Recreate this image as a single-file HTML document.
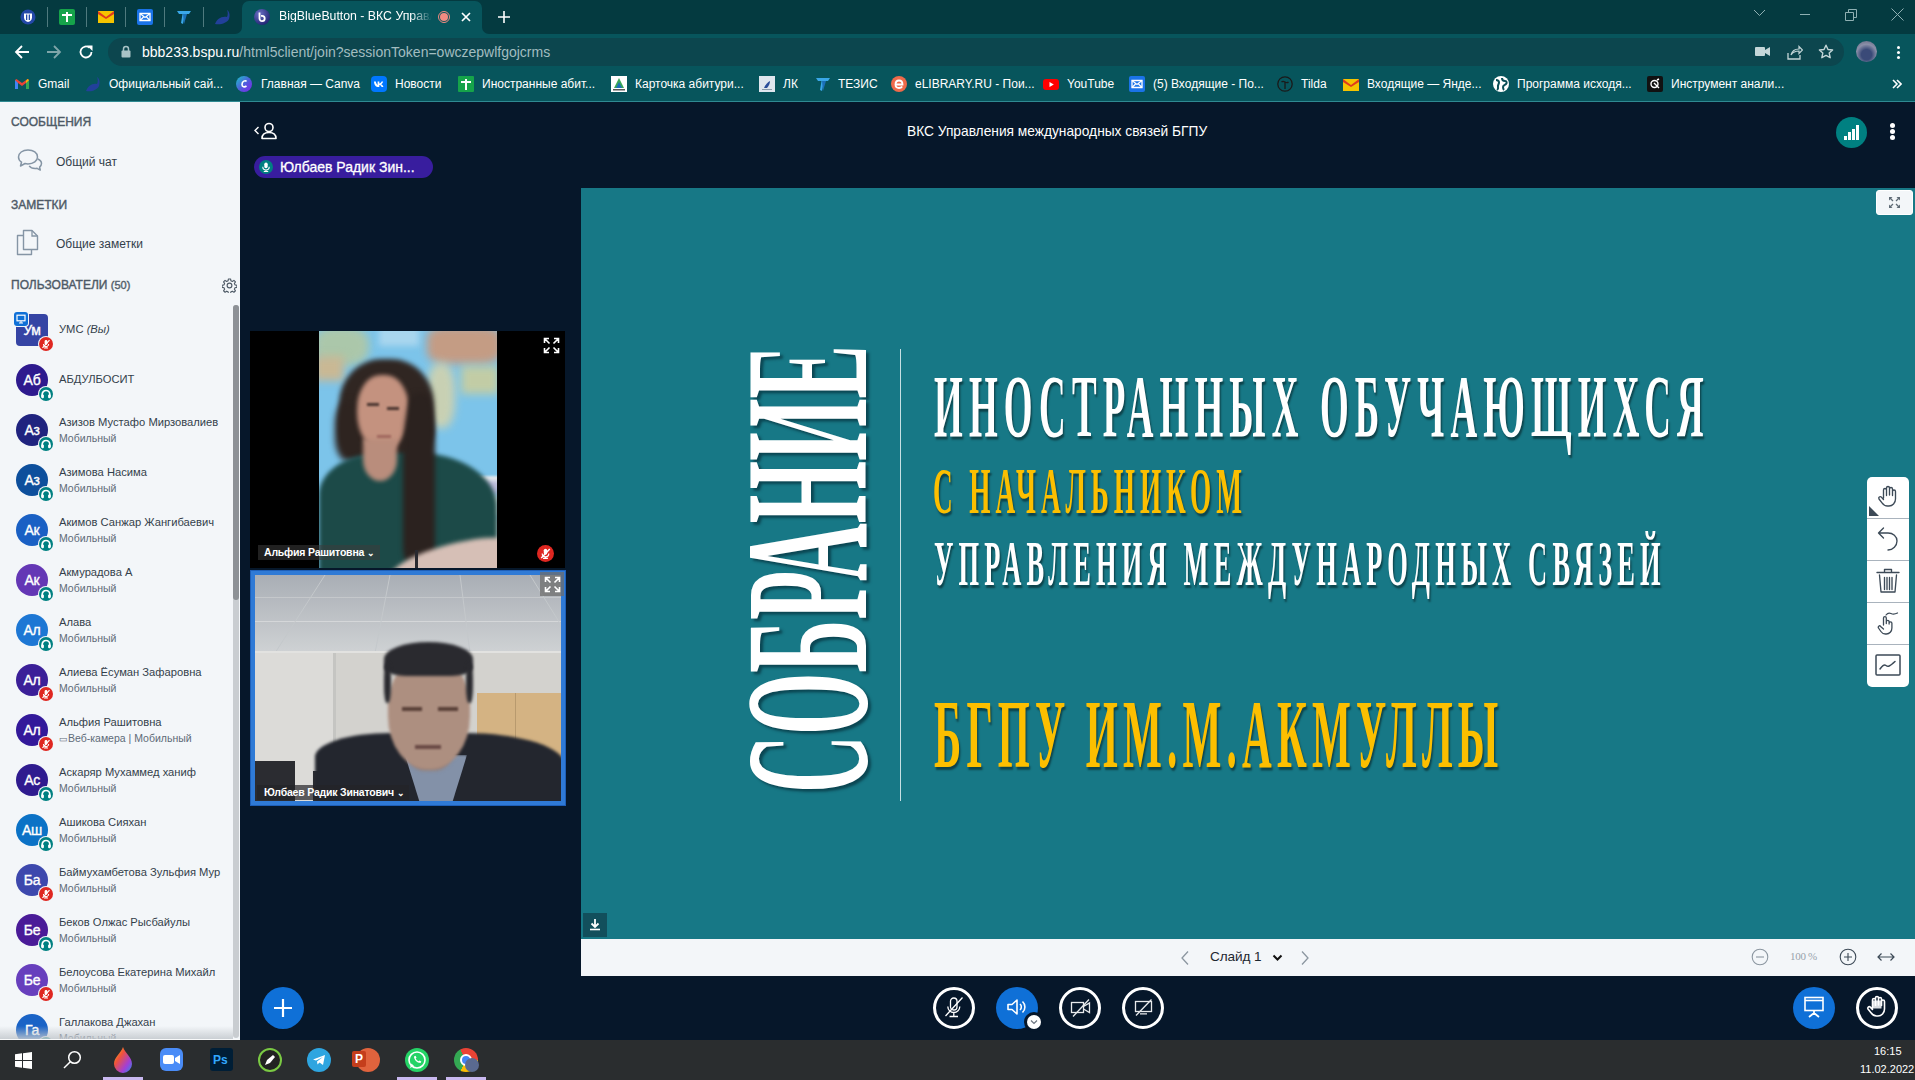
<!DOCTYPE html>
<html><head><meta charset="utf-8">
<style>
*{margin:0;padding:0;box-sizing:border-box}
html,body{width:1915px;height:1080px;overflow:hidden;background:#06172a;font-family:"Liberation Sans",sans-serif}
.a{position:absolute}
.t{position:absolute;white-space:nowrap;line-height:1}
/* chrome */
#tabs{left:0;top:0;width:1915px;height:34px;background:#043a40}
#toolbar{left:0;top:34px;width:1915px;height:68px;background:#07555c}
#addr{left:108px;top:38px;width:1736px;height:28px;border-radius:14px;background:#0c464e}
.bm{position:absolute;top:77px;font-size:12px;color:#fff;white-space:nowrap;line-height:14px}
.bi{position:absolute;top:76px;width:16px;height:16px}
/* sidebar */
#side{left:0;top:102px;width:240px;height:938px;background:#f3f6f9;overflow:hidden}
.hd{position:absolute;left:11px;font-size:12px;color:#4e5a66;-webkit-text-stroke:.4px #4e5a66;white-space:nowrap;line-height:14px}
.usr{position:absolute;left:0;width:232px;height:50px}
.av{position:absolute;left:16px;width:32px;height:32px;border-radius:50%;color:#fff;font-size:14px;line-height:32px;text-align:center;letter-spacing:-.3px;-webkit-text-stroke:.35px #fff}
.nm{position:absolute;left:59px;font-size:11.2px;color:#333f4b;white-space:nowrap;line-height:13px}
.sub{position:absolute;left:59px;font-size:10.5px;color:#5e6b78;white-space:nowrap;line-height:13px}
.bd{position:absolute;left:39px;top:23px;width:14px;height:14px;border-radius:50%}
.bd.g{background:#008081}
.bd.r{background:#df2721}
/* main */
#slide{left:581px;top:188px;width:1334px;height:751px;background:#177886;overflow:hidden}
#pbar{left:581px;top:939px;width:1334px;height:37px;background:#f3f6f9}
#taskbar{left:0;top:1040px;width:1915px;height:40px;background:#2a2d2f}
.btn{position:absolute;top:987px;width:42px;height:42px;border-radius:50%;border:3px solid #fff}
.sl{position:absolute;font-family:"Liberation Serif",serif;color:#fff;white-space:nowrap;line-height:1;transform-origin:0 0;text-shadow:3px 3px 3px rgba(0,0,0,.45)}
</style></head><body>

<!-- ================= BROWSER CHROME ================= -->
<div id="tabs" class="a"></div>
<div id="toolbar" class="a"></div>
<div class="a" style="left:234px;top:24px;width:256px;height:10px;background:#07555c"></div>
<div class="a" style="left:226px;top:14px;width:16px;height:20px;background:#043a40;border-radius:0 0 7px 0"></div>
<div class="a" style="left:482px;top:14px;width:16px;height:20px;background:#043a40;border-radius:0 0 0 7px"></div>
<div class="a" style="left:242px;top:1px;width:240px;height:33px;background:#07555c;border-radius:7px 7px 0 0"></div>
<div id="addr" class="a"></div>

<!-- tab favicons -->
<svg class="a" style="left:20px;top:9px" width="16" height="16" viewBox="0 0 16 16"><circle cx="8" cy="8" r="7.5" fill="#2448a8"/><path d="M4 4.5h8v4c0 2.5-2 4-4 4.5-2-.5-4-2-4-4.5z" fill="#fff"/><path d="M6 5.5h1.3v5.5H6zM8.7 5.5H10v5.5H8.7z" fill="#2448a8"/></svg>
<div class="a" style="left:47px;top:7px;width:1px;height:20px;background:#4f7a7e"></div>
<svg class="a" style="left:59px;top:9px" width="16" height="16" viewBox="0 0 16 16"><rect width="16" height="16" rx="2" fill="#16a34a"/><path d="M7 3h2v10H7z M3 5h10v2H3z" fill="#fff"/></svg>
<div class="a" style="left:86px;top:7px;width:1px;height:20px;background:#4f7a7e"></div>
<svg class="a" style="left:98px;top:10px" width="16" height="14" viewBox="0 0 16 14"><rect y="1" width="16" height="12" fill="#f5c400"/><path d="M0 1l8 6 8-6v3L8 9 0 4z" fill="#e03a1e"/></svg>
<div class="a" style="left:125px;top:7px;width:1px;height:20px;background:#4f7a7e"></div>
<svg class="a" style="left:137px;top:9px" width="16" height="16" viewBox="0 0 16 16"><rect width="16" height="16" rx="2" fill="#1a73e8"/><path d="M3 4.5h10v7H3z" fill="none" stroke="#fff" stroke-width="1.3"/><path d="M3 4.5l5 4 5-4M3 11.5l3.5-3.5M13 11.5L9.5 8" fill="none" stroke="#fff" stroke-width="1.2"/></svg>
<div class="a" style="left:164px;top:7px;width:1px;height:20px;background:#4f7a7e"></div>
<svg class="a" style="left:176px;top:9px" width="16" height="16" viewBox="0 0 16 16"><path d="M1 2h14l-2 3H9l-2 10-2-1 1.5-9H3z" fill="#3aa7e8"/><path d="M7 5h4l-3 10z" fill="#1b6fb8"/></svg>
<div class="a" style="left:203px;top:7px;width:1px;height:20px;background:#4f7a7e"></div>
<svg class="a" style="left:214px;top:9px" width="17" height="16" viewBox="0 0 17 16"><path d="M1 15c2-5 6-8 12-7 1-2 1-5 0-7 3 2 3 6 2 9-2 4-8 6-14 5z" fill="#22409a"/></svg>
<!-- active tab -->
<svg class="a" style="left:254px;top:9px" width="16" height="16" viewBox="0 0 16 16"><defs><radialGradient id="bbg" cx=".35" cy=".3" r=".8"><stop offset="0" stop-color="#6a6fc4"/><stop offset="1" stop-color="#1c1f6e"/></radialGradient></defs><circle cx="8" cy="8" r="8" fill="url(#bbg)"/><path d="M5.5 3.5v6a2.6 2.6 0 1 0 2.6-2.6H7" fill="none" stroke="#fff" stroke-width="1.8"/></svg>
<div class="t" style="left:279px;top:10px;font-size:12.3px;color:#fff;width:153px;overflow:hidden;-webkit-mask-image:linear-gradient(90deg,#000 86%,transparent)">BigBlueButton - ВКС Управления</div>
<svg class="a" style="left:438px;top:11px" width="12" height="12" viewBox="0 0 12 12"><circle cx="6" cy="6" r="5.5" fill="none" stroke="#f28b82" stroke-width="1"/><circle cx="6" cy="6" r="4" fill="#f28b82"/></svg>
<svg class="a" style="left:461px;top:12px" width="10" height="10" viewBox="0 0 10 10"><path d="M1 1l8 8M9 1L1 9" stroke="#fff" stroke-width="1.7"/></svg>
<svg class="a" style="left:497px;top:10px" width="14" height="14" viewBox="0 0 14 14"><path d="M7 1v12M1 7h12" stroke="#fff" stroke-width="1.6"/></svg>
<!-- window controls -->
<svg class="a" style="left:1753px;top:9px" width="13" height="8" viewBox="0 0 13 8"><path d="M1 1l5.5 5.5L12 1" fill="none" stroke="#8fb0b3" stroke-width="1"/></svg>
<div class="a" style="left:1800px;top:14px;width:10px;height:1px;background:#8fb0b3"></div>
<svg class="a" style="left:1845px;top:9px" width="12" height="12" viewBox="0 0 12 12"><path d="M.5 3.5h8v8h-8z M3.5 3.5V.5h8v8h-3" fill="none" stroke="#8fb0b3" stroke-width="1"/></svg>
<svg class="a" style="left:1891px;top:8px" width="13" height="13" viewBox="0 0 13 13"><path d="M.5 .5l12 12M12.5 .5l-12 12" fill="none" stroke="#8fb0b3" stroke-width="1"/></svg>
<!-- toolbar -->
<svg class="a" style="left:14px;top:44px" width="16" height="16" viewBox="0 0 16 16"><path d="M15 8H2M8 2L2 8l6 6" fill="none" stroke="#fff" stroke-width="1.8"/></svg>
<svg class="a" style="left:46px;top:44px" width="16" height="16" viewBox="0 0 16 16"><path d="M1 8h13M8 2l6 6-6 6" fill="none" stroke="#7fa5a9" stroke-width="1.8"/></svg>
<svg class="a" style="left:78px;top:44px" width="16" height="16" viewBox="0 0 16 16"><path d="M13.5 8A5.5 5.5 0 1 1 11.6 3.8" fill="none" stroke="#fff" stroke-width="1.8"/><path d="M9 1.5h5.5V7z" fill="#fff"/></svg>
<svg class="a" style="left:121px;top:45px" width="10" height="13" viewBox="0 0 10 13"><path d="M2.5 6V4a2.5 2.5 0 0 1 5 0v2" fill="none" stroke="#a9c3c6" stroke-width="1.5"/><rect x="0.5" y="5.5" width="9" height="7" rx="1" fill="#a9c3c6"/></svg>
<div class="t" style="left:142px;top:45px;font-size:14px;color:#fff;line-height:14px">bbb233.bspu.ru<span style="color:#a2bdc0">/html5client/join?sessionToken=owczepwlfgojcrms</span></div>
<svg class="a" style="left:1755px;top:46px" width="15" height="11" viewBox="0 0 15 11"><rect y="1" width="10" height="9" rx="1" fill="#c4d6d8"/><path d="M10 4l5-3v9l-5-3z" fill="#c4d6d8"/></svg>
<svg class="a" style="left:1787px;top:44px" width="16" height="16" viewBox="0 0 16 16"><path d="M1 9v6h12v-4" fill="none" stroke="#c4d6d8" stroke-width="1.3"/><path d="M4 11c1-4 4-6 8-6V2.5l3.5 3.5L12 9.5V7c-3 0-6 1-8 4z" fill="none" stroke="#c4d6d8" stroke-width="1.2"/></svg>
<svg class="a" style="left:1818px;top:44px" width="16" height="16" viewBox="0 0 16 16"><path d="M8 1.2l2 4.3 4.6.5-3.4 3.1 1 4.6L8 11.4l-4.2 2.3 1-4.6L1.4 6l4.6-.5z" fill="none" stroke="#c4d6d8" stroke-width="1.4" stroke-linejoin="round"/></svg>
<div class="a" style="left:1856px;top:41px;width:21px;height:21px;border-radius:50%;background:radial-gradient(circle at 50% 65%,#3a4a78 0 30%,#8a8fa8 60%,#5a6078 100%)"></div>
<div class="a" style="left:1897px;top:46px;width:3px;height:3px;border-radius:50%;background:#fff;box-shadow:0 5px 0 #fff,0 10px 0 #fff"></div>

<!-- bookmarks -->
<svg class="bi" style="left:14px" width="16" height="16" viewBox="0 0 16 16"><path d="M1 4v9h3V7l4 3 4-3v6h3V4l-1.5-1L8 7 2.5 3z" fill="#ea4335"/><path d="M1 4v9h3V7z" fill="#4285f4"/><path d="M12 7v6h3V4z" fill="#34a853"/><path d="M13.5 3L15 4l-3 3V5z" fill="#fbbc04"/></svg>
<div class="bm" style="left:38px">Gmail</div>
<svg class="bi" style="left:85px" width="16" height="16" viewBox="0 0 16 16"><path d="M1 15c2-5 6-8 11-7 1-2 1-5 0-7 3 2 3 6 2 9-2 4-7 6-13 5z" fill="#22409a"/></svg>
<div class="bm" style="left:109px">Официальный сай...</div>
<svg class="bi" style="left:236px" width="16" height="16" viewBox="0 0 16 16"><defs><linearGradient id="cg" x1="0" y1="0" x2="1" y2="1"><stop offset="0" stop-color="#18c4c9"/><stop offset=".6" stop-color="#5a4fe0"/><stop offset="1" stop-color="#7d2ae8"/></linearGradient></defs><circle cx="8" cy="8" r="8" fill="url(#cg)"/><path d="M10.5 5.5c-1-1.5-4.5-.5-4.5 3 0 2.5 2.5 3 4.5 1.5" fill="none" stroke="#fff" stroke-width="1.6"/></svg>
<div class="bm" style="left:261px">Главная — Canva</div>
<svg class="bi" style="left:371px" width="16" height="16" viewBox="0 0 16 16"><rect width="16" height="16" rx="4" fill="#0077ff"/><path d="M3 5.5h1.8c.3 2 1.2 3.2 1.8 3.4V5.5h1.7v2c1 0 2-1.2 2.2-2h1.7c-.3 1.2-1.2 2.3-2 2.8 1 .4 1.9 1.5 2.2 2.7h-1.8c-.4-1-1.2-1.8-2.3-1.9V11h-.3C4.5 11 3.2 9 3 5.5z" fill="#fff"/></svg>
<div class="bm" style="left:395px">Новости</div>
<svg class="bi" style="left:458px" width="16" height="16" viewBox="0 0 16 16"><rect width="16" height="16" rx="1" fill="#16a34a"/><path d="M7 3h2v11H7z M3 5h10v2H3z" fill="#fff"/></svg>
<div class="bm" style="left:482px">Иностранные абит...</div>
<svg class="bi" style="left:611px" width="16" height="16" viewBox="0 0 16 16"><rect width="16" height="16" fill="#fff"/><path d="M8 2l5 10H3z" fill="#3aa657"/><path d="M8 6l3 6H5z" fill="#1d6fb8"/><rect x="2" y="13" width="12" height="1.5" fill="#555"/></svg>
<div class="bm" style="left:635px">Карточка абитури...</div>
<svg class="bi" style="left:759px" width="16" height="16" viewBox="0 0 16 16"><rect width="16" height="16" fill="#dfe6ee"/><path d="M5 12c1-3 4-6 6-7 0 2-1 5-3 7z" fill="#2a4d9a"/><rect x="3" y="13" width="10" height="1" fill="#8a9aaa"/></svg>
<div class="bm" style="left:783px">ЛК</div>
<svg class="bi" style="left:815px" width="16" height="16" viewBox="0 0 16 16"><path d="M1 2h14l-2 3H9l-2 10-2-1 1.5-9H3z" fill="#3aa7e8"/><path d="M7 5h4l-3 10z" fill="#1b6fb8"/></svg>
<div class="bm" style="left:838px">ТЕЗИС</div>
<svg class="bi" style="left:891px" width="16" height="16" viewBox="0 0 16 16"><circle cx="8" cy="8" r="8" fill="#ef6a4a"/><path d="M4.5 8.5h7c0-2.5-1.5-4-3.5-4S4.5 6 4.5 8.5 6 12 8 12c1.5 0 2.5-.5 3.2-1.5" fill="none" stroke="#fff" stroke-width="1.8"/></svg>
<div class="bm" style="left:915px">eLIBRARY.RU - Пои...</div>
<svg class="bi" style="left:1043px" width="16" height="16" viewBox="0 0 16 16"><rect x="0" y="3" width="16" height="11" rx="3" fill="#ff0000"/><path d="M6.5 6v5l4.3-2.5z" fill="#fff"/></svg>
<div class="bm" style="left:1067px">YouTube</div>
<svg class="bi" style="left:1129px" width="16" height="16" viewBox="0 0 16 16"><rect width="16" height="16" rx="2" fill="#1a73e8"/><path d="M3 4.5h10v7H3z" fill="none" stroke="#fff" stroke-width="1.3"/><path d="M3 4.5l5 4 5-4M3 11.5l3.5-3.5M13 11.5L9.5 8" fill="none" stroke="#fff" stroke-width="1.2"/></svg>
<div class="bm" style="left:1153px">(5) Входящие - По...</div>
<svg class="bi" style="left:1277px" width="16" height="16" viewBox="0 0 16 16"><circle cx="8" cy="8" r="7.2" fill="none" stroke="#1a1a1a" stroke-width="1.3"/><path d="M4.5 6c1-1 2-1 3.5 0s2.5 1 3.5 0M8 6.3V13" fill="none" stroke="#1a1a1a" stroke-width="1.3"/></svg>
<div class="bm" style="left:1301px">Tilda</div>
<svg class="bi" style="left:1343px;top:77px" width="16" height="14" viewBox="0 0 16 14"><rect y="1" width="16" height="12" fill="#f5c400"/><path d="M0 1l8 6 8-6v3L8 9 0 4z" fill="#e03a1e"/></svg>
<div class="bm" style="left:1367px">Входящие — Янде...</div>
<svg class="bi" style="left:1493px" width="16" height="16" viewBox="0 0 16 16"><circle cx="8" cy="8" r="8" fill="#fff"/><path d="M3 4c2 0 3 1 3 2.5S4.5 9 5 11s-1 3-1 3M9 2c0 2 1 3 3 3s2 2 1 3-3 1-3 3 1 3 1 3" fill="none" stroke="#0a4e56" stroke-width="2"/></svg>
<div class="bm" style="left:1517px">Программа исходя...</div>
<svg class="bi" style="left:1647px" width="16" height="16" viewBox="0 0 16 16"><rect width="16" height="16" rx="2" fill="#111"/><circle cx="7.5" cy="8" r="3.5" fill="none" stroke="#fff" stroke-width="1.4"/><path d="M7 7l5 5M10 4l2-1" stroke="#fff" stroke-width="1.4"/></svg>
<div class="bm" style="left:1671px">Инструмент анали...</div>
<svg class="a" style="left:1892px;top:79px" width="10" height="10" viewBox="0 0 10 10"><path d="M1 1l4 4-4 4M5 1l4 4-4 4" fill="none" stroke="#fff" stroke-width="1.6"/></svg>
<div class="a" style="left:0;top:101px;width:1915px;height:1px;background:#2f8a92"></div>


<!-- ================= SIDEBAR ================= -->
<div id="side" class="a"></div>
<div class="hd" style="top:115px">СООБЩЕНИЯ</div>
<svg class="a" style="left:17px;top:148px" width="26" height="25" viewBox="0 0 26 25"><path d="M11 2C5.5 2 1.5 5 1.5 9c0 2.2 1.2 4 3 5.2L3.5 18l4.5-2.5c1 .3 2 .4 3 .4 5.5 0 9.5-3 9.5-7S16.5 2 11 2z" fill="none" stroke="#8595a5" stroke-width="1.5" stroke-linejoin="round"/><path d="M20.8 11c2.2.9 3.7 2.6 3.7 4.6 0 1.4-.7 2.6-1.9 3.5l.7 3-3.2-1.8c-.6.1-1.3.2-2 .2-2.6 0-4.8-1-5.9-2.6" fill="none" stroke="#8595a5" stroke-width="1.5" stroke-linejoin="round"/></svg>
<div class="t" style="left:56px;top:156px;font-size:12px;color:#333f4b">Общий чат</div>
<div class="hd" style="top:198px">ЗАМЕТКИ</div>
<svg class="a" style="left:16px;top:229px" width="23" height="27" viewBox="0 0 23 27"><path d="M7.5 1.5h8.5l5.5 5.5v13.5H7.5z" fill="none" stroke="#8595a5" stroke-width="1.4" stroke-linejoin="round"/><path d="M16 1.5v5.5h5.5" fill="none" stroke="#8595a5" stroke-width="1.3"/><path d="M7.5 6.5H1.5v19h14v-5" fill="none" stroke="#8595a5" stroke-width="1.4" stroke-linejoin="round"/></svg>
<div class="t" style="left:56px;top:238px;font-size:12px;color:#333f4b">Общие заметки</div>
<div class="hd" style="top:278px">ПОЛЬЗОВАТЕЛИ <span style="font-size:11px;color:#5e6a76">(50)</span></div>
<svg class="a" style="left:222px;top:278px" width="15" height="15" viewBox="0 0 24 24"><path d="M10.3 1.5h3.4l.6 3 2.2 1 2.6-1.7 2.4 2.4-1.7 2.6 1 2.2 3 .6v3.4l-3 .6-1 2.2 1.7 2.6-2.4 2.4-2.6-1.7-2.2 1-.6 3h-3.4l-.6-3-2.2-1-2.6 1.7-2.4-2.4 1.7-2.6-1-2.2-3-.6v-3.4l3-.6 1-2.2-1.7-2.6 2.4-2.4 2.6 1.7 2.2-1z" fill="none" stroke="#4e5a66" stroke-width="1.8" stroke-linejoin="round"/><circle cx="12" cy="12" r="3.8" fill="none" stroke="#4e5a66" stroke-width="1.8"/></svg>
<div class="av a" style="top:314px;background:#3544a4;border-radius:4px">Ум</div>
<div class="a" style="left:39px;top:337px;width:14px;height:14px;border-radius:50%;background:#df2721;box-shadow:0 0 0 1px #f3f6f9"><svg width="14" height="14" viewBox="0 0 14 14" style="position:absolute;left:0;top:0"><rect x="5.6" y="3" width="2.8" height="5" rx="1.4" fill="#fff"/><path d="M4.3 7a2.7 2.7 0 0 0 5.4 0M7 9.7v1.3M5 11h4" fill="none" stroke="#fff" stroke-width="1"/><path d="M3.5 10.8L10.5 3.2" stroke="#fff" stroke-width="1.2"/></svg></div>
<div class="a" style="left:14px;top:312px;width:14px;height:14px;border-radius:3px;background:#0f70d7;box-shadow:0 0 0 1px #f3f6f9"><svg width="14" height="14" viewBox="0 0 14 14" style="position:absolute;left:0;top:0"><rect x="3" y="3.2" width="8" height="5.6" fill="none" stroke="#fff" stroke-width="1.2"/><path d="M7 9v2M5 11h4" stroke="#fff" stroke-width="1"/></svg></div>
<div class="nm" style="top:323px">УМС <i style='color:#333f4b'>(Вы)</i></div>
<div class="av a" style="top:364px;background:#2e1a8e;border-radius:50%">Аб</div>
<div class="a" style="left:39px;top:387px;width:14px;height:14px;border-radius:50%;background:#008081;box-shadow:0 0 0 1px #f3f6f9"><svg width="14" height="14" viewBox="0 0 14 14" style="position:absolute;left:0;top:0"><path d="M3.2 10V7.3a3.8 3.8 0 0 1 7.6 0V10" fill="none" stroke="#fff" stroke-width="1.7"/><rect x="2.3" y="7.4" width="2.6" height="3.8" rx="1" fill="#fff"/><rect x="9.1" y="7.4" width="2.6" height="3.8" rx="1" fill="#fff"/></svg></div>
<div class="nm" style="top:373px">АБДУЛБОСИТ</div>
<div class="av a" style="top:414px;background:#20237f;border-radius:50%">Аз</div>
<div class="a" style="left:39px;top:437px;width:14px;height:14px;border-radius:50%;background:#008081;box-shadow:0 0 0 1px #f3f6f9"><svg width="14" height="14" viewBox="0 0 14 14" style="position:absolute;left:0;top:0"><path d="M3.2 10V7.3a3.8 3.8 0 0 1 7.6 0V10" fill="none" stroke="#fff" stroke-width="1.7"/><rect x="2.3" y="7.4" width="2.6" height="3.8" rx="1" fill="#fff"/><rect x="9.1" y="7.4" width="2.6" height="3.8" rx="1" fill="#fff"/></svg></div>
<div class="nm" style="top:416px">Азизов Мустафо Мирзовалиев</div>
<div class="sub" style="top:432px">Мобильный</div>
<div class="av a" style="top:464px;background:#0d4f9c;border-radius:50%">Аз</div>
<div class="a" style="left:39px;top:487px;width:14px;height:14px;border-radius:50%;background:#008081;box-shadow:0 0 0 1px #f3f6f9"><svg width="14" height="14" viewBox="0 0 14 14" style="position:absolute;left:0;top:0"><path d="M3.2 10V7.3a3.8 3.8 0 0 1 7.6 0V10" fill="none" stroke="#fff" stroke-width="1.7"/><rect x="2.3" y="7.4" width="2.6" height="3.8" rx="1" fill="#fff"/><rect x="9.1" y="7.4" width="2.6" height="3.8" rx="1" fill="#fff"/></svg></div>
<div class="nm" style="top:466px">Азимова Насима</div>
<div class="sub" style="top:482px">Мобильный</div>
<div class="av a" style="top:514px;background:#1a60c4;border-radius:50%">Ак</div>
<div class="a" style="left:39px;top:537px;width:14px;height:14px;border-radius:50%;background:#008081;box-shadow:0 0 0 1px #f3f6f9"><svg width="14" height="14" viewBox="0 0 14 14" style="position:absolute;left:0;top:0"><path d="M3.2 10V7.3a3.8 3.8 0 0 1 7.6 0V10" fill="none" stroke="#fff" stroke-width="1.7"/><rect x="2.3" y="7.4" width="2.6" height="3.8" rx="1" fill="#fff"/><rect x="9.1" y="7.4" width="2.6" height="3.8" rx="1" fill="#fff"/></svg></div>
<div class="nm" style="top:516px">Акимов Санжар Жангибаевич</div>
<div class="sub" style="top:532px">Мобильный</div>
<div class="av a" style="top:564px;background:#6437b5;border-radius:50%">Ак</div>
<div class="a" style="left:39px;top:587px;width:14px;height:14px;border-radius:50%;background:#008081;box-shadow:0 0 0 1px #f3f6f9"><svg width="14" height="14" viewBox="0 0 14 14" style="position:absolute;left:0;top:0"><path d="M3.2 10V7.3a3.8 3.8 0 0 1 7.6 0V10" fill="none" stroke="#fff" stroke-width="1.7"/><rect x="2.3" y="7.4" width="2.6" height="3.8" rx="1" fill="#fff"/><rect x="9.1" y="7.4" width="2.6" height="3.8" rx="1" fill="#fff"/></svg></div>
<div class="nm" style="top:566px">Акмурадова А</div>
<div class="sub" style="top:582px">Мобильный</div>
<div class="av a" style="top:614px;background:#1d77d4;border-radius:50%">Ал</div>
<div class="a" style="left:39px;top:637px;width:14px;height:14px;border-radius:50%;background:#008081;box-shadow:0 0 0 1px #f3f6f9"><svg width="14" height="14" viewBox="0 0 14 14" style="position:absolute;left:0;top:0"><path d="M3.2 10V7.3a3.8 3.8 0 0 1 7.6 0V10" fill="none" stroke="#fff" stroke-width="1.7"/><rect x="2.3" y="7.4" width="2.6" height="3.8" rx="1" fill="#fff"/><rect x="9.1" y="7.4" width="2.6" height="3.8" rx="1" fill="#fff"/></svg></div>
<div class="nm" style="top:616px">Алава</div>
<div class="sub" style="top:632px">Мобильный</div>
<div class="av a" style="top:664px;background:#3b1f98;border-radius:50%">Ал</div>
<div class="a" style="left:39px;top:687px;width:14px;height:14px;border-radius:50%;background:#df2721;box-shadow:0 0 0 1px #f3f6f9"><svg width="14" height="14" viewBox="0 0 14 14" style="position:absolute;left:0;top:0"><rect x="5.6" y="3" width="2.8" height="5" rx="1.4" fill="#fff"/><path d="M4.3 7a2.7 2.7 0 0 0 5.4 0M7 9.7v1.3M5 11h4" fill="none" stroke="#fff" stroke-width="1"/><path d="M3.5 10.8L10.5 3.2" stroke="#fff" stroke-width="1.2"/></svg></div>
<div class="nm" style="top:666px">Алиева Ёсуман Зафаровна</div>
<div class="sub" style="top:682px">Мобильный</div>
<div class="av a" style="top:714px;background:#33199a;border-radius:50%">Ал</div>
<div class="a" style="left:39px;top:737px;width:14px;height:14px;border-radius:50%;background:#df2721;box-shadow:0 0 0 1px #f3f6f9"><svg width="14" height="14" viewBox="0 0 14 14" style="position:absolute;left:0;top:0"><rect x="5.6" y="3" width="2.8" height="5" rx="1.4" fill="#fff"/><path d="M4.3 7a2.7 2.7 0 0 0 5.4 0M7 9.7v1.3M5 11h4" fill="none" stroke="#fff" stroke-width="1"/><path d="M3.5 10.8L10.5 3.2" stroke="#fff" stroke-width="1.2"/></svg></div>
<div class="nm" style="top:716px">Альфия Рашитовна</div>
<div class="sub" style="top:732px"><span style='font-size:9px'>&#9645;</span>Веб-камера | Мобильный</div>
<div class="av a" style="top:764px;background:#2f1b8f;border-radius:50%">Ас</div>
<div class="a" style="left:39px;top:787px;width:14px;height:14px;border-radius:50%;background:#008081;box-shadow:0 0 0 1px #f3f6f9"><svg width="14" height="14" viewBox="0 0 14 14" style="position:absolute;left:0;top:0"><path d="M3.2 10V7.3a3.8 3.8 0 0 1 7.6 0V10" fill="none" stroke="#fff" stroke-width="1.7"/><rect x="2.3" y="7.4" width="2.6" height="3.8" rx="1" fill="#fff"/><rect x="9.1" y="7.4" width="2.6" height="3.8" rx="1" fill="#fff"/></svg></div>
<div class="nm" style="top:766px">Аскаряр Мухаммед ханиф</div>
<div class="sub" style="top:782px">Мобильный</div>
<div class="av a" style="top:814px;background:#0b72c6;border-radius:50%">Аш</div>
<div class="a" style="left:39px;top:837px;width:14px;height:14px;border-radius:50%;background:#008081;box-shadow:0 0 0 1px #f3f6f9"><svg width="14" height="14" viewBox="0 0 14 14" style="position:absolute;left:0;top:0"><path d="M3.2 10V7.3a3.8 3.8 0 0 1 7.6 0V10" fill="none" stroke="#fff" stroke-width="1.7"/><rect x="2.3" y="7.4" width="2.6" height="3.8" rx="1" fill="#fff"/><rect x="9.1" y="7.4" width="2.6" height="3.8" rx="1" fill="#fff"/></svg></div>
<div class="nm" style="top:816px">Ашикова Сияхан</div>
<div class="sub" style="top:832px">Мобильный</div>
<div class="av a" style="top:864px;background:#3d48ad;border-radius:50%">Ба</div>
<div class="a" style="left:39px;top:887px;width:14px;height:14px;border-radius:50%;background:#df2721;box-shadow:0 0 0 1px #f3f6f9"><svg width="14" height="14" viewBox="0 0 14 14" style="position:absolute;left:0;top:0"><rect x="5.6" y="3" width="2.8" height="5" rx="1.4" fill="#fff"/><path d="M4.3 7a2.7 2.7 0 0 0 5.4 0M7 9.7v1.3M5 11h4" fill="none" stroke="#fff" stroke-width="1"/><path d="M3.5 10.8L10.5 3.2" stroke="#fff" stroke-width="1.2"/></svg></div>
<div class="nm" style="top:866px">Баймухамбетова Зульфия Мур</div>
<div class="sub" style="top:882px">Мобильный</div>
<div class="av a" style="top:914px;background:#4a1b98;border-radius:50%">Бе</div>
<div class="a" style="left:39px;top:937px;width:14px;height:14px;border-radius:50%;background:#008081;box-shadow:0 0 0 1px #f3f6f9"><svg width="14" height="14" viewBox="0 0 14 14" style="position:absolute;left:0;top:0"><path d="M3.2 10V7.3a3.8 3.8 0 0 1 7.6 0V10" fill="none" stroke="#fff" stroke-width="1.7"/><rect x="2.3" y="7.4" width="2.6" height="3.8" rx="1" fill="#fff"/><rect x="9.1" y="7.4" width="2.6" height="3.8" rx="1" fill="#fff"/></svg></div>
<div class="nm" style="top:916px">Беков Олжас Рысбайулы</div>
<div class="sub" style="top:932px">Мобильный</div>
<div class="av a" style="top:964px;background:#673fbd;border-radius:50%">Бе</div>
<div class="a" style="left:39px;top:987px;width:14px;height:14px;border-radius:50%;background:#df2721;box-shadow:0 0 0 1px #f3f6f9"><svg width="14" height="14" viewBox="0 0 14 14" style="position:absolute;left:0;top:0"><rect x="5.6" y="3" width="2.8" height="5" rx="1.4" fill="#fff"/><path d="M4.3 7a2.7 2.7 0 0 0 5.4 0M7 9.7v1.3M5 11h4" fill="none" stroke="#fff" stroke-width="1"/><path d="M3.5 10.8L10.5 3.2" stroke="#fff" stroke-width="1.2"/></svg></div>
<div class="nm" style="top:966px">Белоусова Екатерина Михайл</div>
<div class="sub" style="top:982px">Мобильный</div>
<div class="av a" style="top:1014px;background:#1a63c6;border-radius:50%">Га</div>
<div class="a" style="left:39px;top:1037px;width:14px;height:14px;border-radius:50%;background:#008081;box-shadow:0 0 0 1px #f3f6f9"><svg width="14" height="14" viewBox="0 0 14 14" style="position:absolute;left:0;top:0"><path d="M3.2 10V7.3a3.8 3.8 0 0 1 7.6 0V10" fill="none" stroke="#fff" stroke-width="1.7"/><rect x="2.3" y="7.4" width="2.6" height="3.8" rx="1" fill="#fff"/><rect x="9.1" y="7.4" width="2.6" height="3.8" rx="1" fill="#fff"/></svg></div>
<div class="nm" style="top:1016px">Галлакова Джахан</div>
<div class="sub" style="top:1032px">Мобильный</div>
<div class="a" style="left:233px;top:305px;width:6px;height:733px;background:#c9cdd1;border-radius:3px"></div>
<div class="a" style="left:233px;top:305px;width:6px;height:295px;background:#8d9196;border-radius:3px"></div>
<div class="a" style="left:0;top:1026px;width:233px;height:13px;background:linear-gradient(rgba(243,246,249,0),rgba(195,200,205,.85))"></div><div class="a" style="left:0;top:1039px;width:240px;height:1px;background:#f8f9fa"></div>

<!-- ================= MAIN ================= -->

<!-- nav bar -->
<svg class="a" style="left:253px;top:122px" width="26" height="18" viewBox="0 0 26 18"><path d="M5.5 5L2 8.5l3.5 3.5" fill="none" stroke="#fff" stroke-width="1.4"/><circle cx="16" cy="5.5" r="4" fill="none" stroke="#fff" stroke-width="1.6"/><path d="M9 16.5c0-4 3-6 7-6s7 2 7 6z" fill="none" stroke="#fff" stroke-width="1.6" stroke-linejoin="round"/></svg>
<div class="t" style="left:907px;top:125px;font-size:13.75px;color:#fff">ВКС Управления международных связей БГПУ</div>
<div class="a" style="left:1836px;top:117px;width:31px;height:31px;border-radius:50%;background:#008081"></div>
<div class="a" style="left:1844px;top:136px;width:3px;height:4px;background:#fff"></div>
<div class="a" style="left:1848px;top:132px;width:3px;height:8px;background:#fff"></div>
<div class="a" style="left:1852px;top:129px;width:3px;height:11px;background:#fff"></div>
<div class="a" style="left:1856px;top:125px;width:3px;height:15px;background:#fff"></div>
<div class="a" style="left:1890px;top:123px;width:5px;height:5px;border-radius:50%;background:#fff;box-shadow:0 6px 0 #fff,0 12px 0 #fff"></div>
<!-- talking pill -->
<div class="a" style="left:254px;top:156px;width:179px;height:22px;border-radius:11px;background:#381d9e"></div>
<div class="a" style="left:259px;top:160px;width:14px;height:14px;border-radius:50%;background:#008081"></div>
<svg class="a" style="left:259px;top:160px" width="14" height="14" viewBox="0 0 14 14"><rect x="5.3" y="2.5" width="3.4" height="5.8" rx="1.7" fill="#fff"/><path d="M3.8 6.8a3.2 3.2 0 0 0 6.4 0M7 10v1.2M4.8 11.5h4.4" fill="none" stroke="#fff" stroke-width="1.1"/></svg>
<div class="t" style="left:280px;top:160px;font-size:14px;color:#fff;-webkit-text-stroke:.3px #fff">Юлбаев Радик Зин...</div>

<!-- video 1 -->
<div class="a" style="left:250px;top:331px;width:315px;height:237px;background:#000"></div>
<div class="a" style="left:319px;top:331px;width:178px;height:237px;overflow:hidden;background:#7cc4ea">
  <div class="a" style="left:-5px;top:-5px;width:55px;height:40px;background:#b4c8a0;filter:blur(4px);border-radius:40%;opacity:.85"></div>
  <div class="a" style="left:-5px;top:25px;width:30px;height:25px;background:#c9b894;filter:blur(4px)"></div>
  <div class="a" style="left:60px;top:-5px;width:40px;height:20px;background:#a9d6ee;filter:blur(3px)"></div>
  <div class="a" style="left:108px;top:-5px;width:75px;height:38px;background:#cc987a;filter:blur(4px);border-radius:30%;opacity:.9"></div>
  <div class="a" style="left:108px;top:32px;width:28px;height:65px;background:#dcd4a6;filter:blur(4px);border-radius:40%;opacity:.8"></div>
  <div class="a" style="left:142px;top:35px;width:38px;height:28px;background:#d4cf94;filter:blur(4px);opacity:.8"></div>
  <div class="a" style="left:100px;top:145px;width:80px;height:12px;background:#e6ecef;filter:blur(1px)"></div>
  <div class="a" style="left:100px;top:150px;width:80px;height:14px;background:#b8b8d8;filter:blur(2px)"></div>
  <div class="a" style="left:95px;top:165px;width:85px;height:20px;background:#e4e6e2;filter:blur(2px)"></div>
  <div class="a" style="left:90px;top:185px;width:90px;height:60px;background:#d2cdc6;filter:blur(3px)"></div>
  <div class="a" style="left:20px;top:28px;width:95px;height:100px;border-radius:45% 45% 30% 30%;background:#302622;filter:blur(2.5px)"></div>
  <div class="a" style="left:16px;top:70px;width:30px;height:60px;border-radius:40%;background:#2e2420;filter:blur(3px)"></div>
  <div class="a" style="left:0;top:122px;width:178px;height:120px;border-radius:35% 45% 0 0;background:#1c4a48;filter:blur(2px)"></div>
  <div class="a" style="left:38px;top:44px;width:52px;height:76px;border-radius:45% 45% 50% 50%;background:#c4927f;filter:blur(2px)"></div>
  <div class="a" style="left:44px;top:108px;width:34px;height:42px;border-radius:0 0 50% 50%;background:#b98d7c;filter:blur(2px)"></div>
  <div class="a" style="left:84px;top:62px;width:32px;height:168px;border-radius:40% 30% 10% 10%;background:#2b221f;filter:blur(2.5px)"></div>
  <div class="a" style="left:48px;top:72px;width:12px;height:3px;background:#4a3530;filter:blur(1px)"></div>
  <div class="a" style="left:68px;top:76px;width:12px;height:3px;background:#4a3530;filter:blur(1px)"></div>
  <div class="a" style="left:58px;top:104px;width:14px;height:3px;background:#a0685e;filter:blur(1px)"></div>
  <div class="a" style="left:68px;top:212px;width:130px;height:40px;border-radius:70% 30% 0 0;background:#d6bfb6;filter:blur(2px);transform:rotate(-9deg)"></div><div class="a" style="left:96px;top:219px;width:3px;height:18px;background:#2a2a30"></div>
</div>
<svg class="a" style="left:543px;top:337px" width="17" height="17" viewBox="0 0 17 17" fill="none" stroke="#fff" stroke-width="1.6"><path d="M1.5 6V1.5H6M1.5 1.5l5 5M11 1.5h4.5V6M15.5 1.5l-5 5M1.5 11v4.5H6M1.5 15.5l5-5M15.5 11v4.5H11M15.5 15.5l-5-5"/></svg>
<div class="a" style="left:258px;top:545px;width:122px;height:15px;background:rgba(60,60,60,.55)"></div>
<div class="t" style="left:264px;top:547px;font-size:10.5px;color:#fff;font-weight:bold;letter-spacing:-.2px">Альфия Рашитовна <span style="font-size:9px">⌄</span></div>
<div class="a" style="left:537px;top:545px;width:17px;height:17px;border-radius:50%;background:#df2721"></div>
<svg class="a" style="left:537px;top:545px" width="17" height="17" viewBox="0 0 14 14"><rect x="5.6" y="3" width="2.8" height="5" rx="1.4" fill="#fff"/><path d="M4.3 7a2.7 2.7 0 0 0 5.4 0M7 9.7v1.3M5 11h4" fill="none" stroke="#fff" stroke-width="1"/><path d="M3.5 10.8L10.5 3.2" stroke="#fff" stroke-width="1.2"/></svg>
<!-- video 2 -->
<div class="a" style="left:250px;top:570px;width:316px;height:236px;background:#2f7ad6;box-shadow:inset 0 0 0 1px #1e5fb8"></div>
<div class="a" style="left:255px;top:575px;width:306px;height:226px;overflow:hidden;background:#d3d2ce">
  <div class="a" style="left:0;top:0;width:306px;height:78px;background:linear-gradient(#a9aeb5,#cfd2d4)"></div>
  <div class="a" style="left:0;top:22px;width:306px;height:1px;background:#c5c8cb"></div>
  <div class="a" style="left:0;top:46px;width:306px;height:1px;background:#d5d7d9"></div>
  <svg class="a" style="left:0;top:0" width="306" height="78" viewBox="0 0 306 78"><path d="M70 0L20 78M135 0L120 78M205 0L215 78M275 0L306 50" stroke="#c4c8cb" stroke-width="1" fill="none"/></svg>
  <div class="a" style="left:0;top:76px;width:306px;height:2px;background:#e2e2e0"></div>
  <div class="a" style="left:0;top:78px;width:80px;height:148px;background:#dcdbd8"></div>
  <div class="a" style="left:78px;top:78px;width:3px;height:148px;background:#c5c5c2"></div>
  <div class="a" style="left:222px;top:118px;width:84px;height:90px;background:#d4b383"></div>
  <div class="a" style="left:260px;top:118px;width:1px;height:90px;background:#b89a6e"></div>
  <div class="a" style="left:0;top:186px;width:40px;height:40px;background:#2b2c31"></div>
  <div class="a" style="left:58px;top:196px;width:22px;height:30px;background:#2b2c31"></div>
  <div class="a" style="left:60px;top:158px;width:250px;height:80px;border-radius:30% 40% 0 0;background:#23262e;filter:blur(1.5px)"></div>
  <div class="a" style="left:150px;top:180px;width:62px;height:50px;background:#8391a8;clip-path:polygon(0 0,100% 0,75% 100%,25% 100%);filter:blur(1px)"></div>
  <div class="a" style="left:152px;top:150px;width:45px;height:45px;background:#9a7c6e;filter:blur(2px);border-radius:0 0 40% 40%"></div>
  <div class="a" style="left:133px;top:84px;width:82px;height:110px;border-radius:42% 42% 48% 48%;background:#ad8f80;filter:blur(1.5px)"></div>
  <div class="a" style="left:129px;top:67px;width:89px;height:34px;border-radius:50% 50% 25% 25%;background:#2a2a2f;filter:blur(1.5px)"></div>
  <div class="a" style="left:129px;top:88px;width:7px;height:40px;border-radius:40%;background:#2a2a2f;filter:blur(1.5px)"></div>
  <div class="a" style="left:211px;top:88px;width:7px;height:40px;border-radius:40%;background:#2a2a2f;filter:blur(1.5px)"></div>
  <div class="a" style="left:147px;top:132px;width:20px;height:4px;background:#5a4038;filter:blur(1px)"></div>
  <div class="a" style="left:183px;top:132px;width:20px;height:4px;background:#5a4038;filter:blur(1px)"></div>
  <div class="a" style="left:160px;top:170px;width:26px;height:4px;background:#6a4a45;filter:blur(1px)"></div>
</div>
<div class="a" style="left:540px;top:572px;width:24px;height:24px;background:rgba(110,110,110,.75)"></div>
<svg class="a" style="left:544px;top:576px" width="17" height="17" viewBox="0 0 17 17" fill="none" stroke="#fff" stroke-width="1.6"><path d="M1.5 6V1.5H6M1.5 1.5l5 5M11 1.5h4.5V6M15.5 1.5l-5 5M1.5 11v4.5H6M1.5 15.5l5-5M15.5 11v4.5H11M15.5 15.5l-5-5"/></svg>
<div class="a" style="left:257px;top:785px;width:152px;height:15px;background:rgba(35,35,40,.7)"></div>
<div class="t" style="left:264px;top:787px;font-size:10.5px;color:#fff;font-weight:bold;letter-spacing:-.2px">Юлбаев Радик Зинатович <span style="font-size:9px">⌄</span></div>
<div id="slide" class="a"></div>
<!-- slide content -->
<div class="sl" style="left:720px;top:793px;font-size:175px;font-weight:bold;transform:rotate(-90deg) scaleX(.458);text-shadow:-6px 3px 4px rgba(0,30,40,.55)">СОБРАНИЕ</div>
<div class="a" style="left:900px;top:349px;width:1px;height:452px;background:#c6dfe3"></div>
<div class="sl" style="left:934px;top:363px;font-size:88px;font-weight:bold;letter-spacing:14.6px;transform:scaleX(.42)">ИНОСТРАННЫХ ОБУЧАЮЩИХСЯ</div>
<div class="sl" style="left:933px;top:459px;font-size:65px;font-weight:bold;letter-spacing:11.7px;transform:scaleX(.42);color:#fcbf00">С НАЧАЛЬНИКОМ</div>
<div class="sl" style="left:934px;top:533px;font-size:63px;font-weight:bold;letter-spacing:12.3px;transform:scaleX(.42)">УПРАВЛЕНИЯ МЕЖДУНАРОДНЫХ СВЯЗЕЙ</div>
<div class="sl" style="left:934px;top:685px;font-size:98px;font-weight:bold;letter-spacing:12.35px;transform:scaleX(.42);color:#fcbf00">БГПУ ИМ.М.АКМУЛЛЫ</div>
<!-- fullscreen btn -->
<div class="a" style="left:1876px;top:190px;width:37px;height:25px;border-radius:3px;background:#f3f6f9;border:1px solid #fff"></div>
<svg class="a" style="left:1888px;top:196px" width="13" height="13" viewBox="0 0 13 13"><path d="M1 1h3.5L1 4.5zM12 1H8.5L12 4.5zM1 12h3.5L1 8.5zM12 12H8.5L12 8.5z" fill="#5f6b76"/><path d="M2 2l3 3M11 2L8 5M2 11l3-3M11 11L8 8" stroke="#5f6b76" stroke-width="1.3"/></svg>
<!-- download btn -->
<div class="a" style="left:583px;top:913px;width:24px;height:24px;background:#124f5c"></div>
<svg class="a" style="left:587px;top:918px" width="16" height="14" viewBox="0 0 16 14"><path d="M8 1v8M4.5 5.5L8 9l3.5-3.5" fill="none" stroke="#fff" stroke-width="1.8"/><path d="M3 11.5h10" stroke="#fff" stroke-width="1.6"/></svg>
<!-- whiteboard toolbar -->
<div class="a" style="left:1867px;top:477px;width:42px;height:210px;border-radius:5px;background:#fff"></div>
<div class="a" style="left:1867px;top:518px;width:42px;height:1px;background:#a9b3bd"></div>
<div class="a" style="left:1867px;top:560px;width:42px;height:1px;background:#a9b3bd"></div>
<div class="a" style="left:1867px;top:602px;width:42px;height:1px;background:#a9b3bd"></div>
<div class="a" style="left:1867px;top:644px;width:42px;height:1px;background:#a9b3bd"></div>
<svg class="a" style="left:1876px;top:484px" width="24" height="24" viewBox="0 0 24 24" fill="none" stroke="#3d4a57" stroke-width="1.35" stroke-linecap="round" stroke-linejoin="round"><path d="M7.5 14V6a1.5 1.5 0 0 1 3 0v5.5M10.5 11V4a1.5 1.5 0 0 1 3 0v7M13.5 11V5a1.5 1.5 0 0 1 3 0v6M16.5 11.5V7.5a1.5 1.5 0 0 1 3 0V15c0 4-3 7-6.5 7h-1.5c-2.5 0-4-1-5.5-3.2L3 15a1.5 1.5 0 0 1 2.3-1.9l2.2 2.4"/></svg>
<svg class="a" style="left:1869px;top:506px" width="10" height="10" viewBox="0 0 10 10"><path d="M0 0L10 10H0z" fill="#3d4a57"/></svg>
<svg class="a" style="left:1876px;top:526px" width="24" height="26" viewBox="0 0 24 26" fill="none" stroke="#3d4a57" stroke-width="1.35" stroke-linecap="round" stroke-linejoin="round"><path d="M7.5 2L2.5 7l5 5M2.5 7H12c5 0 9 3.5 9 8s-4 9-9 9"/></svg>
<svg class="a" style="left:1876px;top:568px" width="24" height="25" viewBox="0 0 24 25" fill="none" stroke="#3d4a57" stroke-width="1.35" stroke-linecap="round" stroke-linejoin="round"><path d="M1 4.5h22M8.5 4.5V1.5h7v3M3.5 7l1.5 17h14l1.5-17M8.5 9.5v12M11 9.5v12M13.5 9.5v12M16 9.5v12"/></svg>
<svg class="a" style="left:1876px;top:610px" width="25" height="25" viewBox="0 0 25 25" fill="none" stroke="#3d4a57" stroke-width="1.3" stroke-linecap="round" stroke-linejoin="round"><path d="M7.5 15V8a1.4 1.4 0 0 1 2.8 0v5.5M10.3 13v-1.2a1.4 1.4 0 0 1 2.8 0V14M13.1 14v-.8a1.4 1.4 0 0 1 2.8 0V18c0 3.5-2.5 6-5.5 6h-1c-2 0-3.5-1-4.5-2.5L2.5 18a1.3 1.3 0 0 1 2.1-1.6L7.5 19"/><path d="M10 5c1.5-2 3-2.5 5-1.5s3.5 1 6.5-.5" stroke-width="1.2"/></svg>
<svg class="a" style="left:1875px;top:654px" width="26" height="22" viewBox="0 0 26 22" fill="none" stroke="#3d4a57" stroke-width="1.5" stroke-linecap="round" stroke-linejoin="round"><rect x="1" y="1" width="24" height="20" rx="1"/><path d="M5 15c2-3 4-5 6-3.5s3.5 1 9-4"/></svg>

<div id="pbar" class="a"></div>
<svg class="a" style="left:1180px;top:950px" width="10" height="16" viewBox="0 0 10 16"><path d="M8 1.5L2 8l6 6.5" fill="none" stroke="#8b96a0" stroke-width="1.3"/></svg>
<div class="t" style="left:1210px;top:950px;font-size:13.6px;color:#1d2730;letter-spacing:-.1px">Слайд 1</div>
<svg class="a" style="left:1272px;top:954px" width="11" height="8" viewBox="0 0 11 8"><path d="M1.5 1.5l4 4 4-4" fill="none" stroke="#111" stroke-width="2"/></svg>
<svg class="a" style="left:1300px;top:950px" width="10" height="16" viewBox="0 0 10 16"><path d="M2 1.5L8 8l-6 6.5" fill="none" stroke="#8b96a0" stroke-width="1.3"/></svg>
<svg class="a" style="left:1751px;top:948px" width="18" height="18" viewBox="0 0 18 18"><circle cx="9" cy="9" r="7.8" fill="none" stroke="#8b96a0" stroke-width="1.1"/><path d="M5 9h8" stroke="#8b96a0" stroke-width="1.1"/></svg>
<div class="t" style="left:1790px;top:951px;font-size:11px;color:#98a2ab;font-family:'Liberation Serif',serif;letter-spacing:-.3px">100 %</div>
<svg class="a" style="left:1839px;top:948px" width="18" height="18" viewBox="0 0 18 18"><circle cx="9" cy="9" r="7.8" fill="none" stroke="#3d4a57" stroke-width="1.1"/><path d="M5 9h8M9 5v8" stroke="#3d4a57" stroke-width="1.1"/></svg>
<svg class="a" style="left:1876px;top:951px" width="20" height="12" viewBox="0 0 20 12"><path d="M2 6h16M5.5 2.5L2 6l3.5 3.5M14.5 2.5L18 6l-3.5 3.5" fill="none" stroke="#3d4a57" stroke-width="1.2"/></svg>
<!-- action bar -->
<div class="a" style="left:262px;top:987px;width:42px;height:42px;border-radius:50%;background:#0f70d7"></div>
<svg class="a" style="left:272px;top:997px" width="22" height="22" viewBox="0 0 22 22"><path d="M11 2v18M2 11h18" stroke="#fff" stroke-width="2.2"/></svg>
<div class="btn" style="left:933px"></div>
<svg class="a" style="left:943px;top:996px" width="22" height="23" viewBox="0 0 22 23" fill="none" stroke="#fff" stroke-width="1.3"><rect x="7.5" y="2" width="6.5" height="12" rx="3.25"/><path d="M4.8 10.5a6 6 0 0 0 12 0M10.8 16.5v3.5M6.5 20.5h8.5M2.5 20L19.5 1.5"/></svg>
<div class="a" style="left:996px;top:987px;width:42px;height:42px;border-radius:50%;background:#0f70d7"></div>
<svg class="a" style="left:1005px;top:995px" width="24" height="24" viewBox="0 0 24 24" fill="none" stroke="#fff" stroke-width="1.6" stroke-linejoin="round"><path d="M3 9.5h4l5-4.5v14l-5-4.5H3z"/><path d="M15 9a4 4 0 0 1 0 6M17.5 6.5a7.5 7.5 0 0 1 0 11"/></svg>
<div class="a" style="left:1024px;top:1012px;width:20px;height:20px;border-radius:50%;background:#06172a"></div>
<div class="a" style="left:1027px;top:1015px;width:14px;height:14px;border-radius:50%;background:#fff"></div>
<svg class="a" style="left:1029px;top:1018px" width="10" height="8" viewBox="0 0 10 8"><path d="M2 2.5l3 3 3-3" fill="none" stroke="#6b7580" stroke-width="1.2"/></svg>
<div class="btn" style="left:1059px"></div>
<svg class="a" style="left:1070px;top:998px" width="22" height="20" viewBox="0 0 22 20" fill="none" stroke="#e8eaec" stroke-width="1.3"><rect x="1.5" y="4.5" width="12" height="10"/><path d="M13.5 8.5l6-3.5v9.5l-6-3.5M3 18.5L19 1.5" /></svg>
<div class="btn" style="left:1122px"></div>
<svg class="a" style="left:1134px;top:998px" width="20" height="19" viewBox="0 0 20 19" fill="none" stroke="#e8eaec" stroke-width="1.3"><rect x="1.5" y="3.5" width="16" height="10"/><path d="M6 15.8h7M2 17.5L17.5 1.5"/></svg>
<div class="a" style="left:1793px;top:987px;width:42px;height:42px;border-radius:50%;background:#0f70d7"></div>
<svg class="a" style="left:1802px;top:996px" width="24" height="22" viewBox="0 0 24 22" fill="none" stroke="#fff" stroke-width="1.6"><rect x="3" y="1.5" width="18" height="13"/><path d="M3 4.5h18"/><path d="M12 15v2M12 17l-5 4M12 17l5 4" stroke-width="1.8"/></svg>
<div class="btn" style="left:1856px"></div>
<svg class="a" style="left:1865px;top:994px" width="24" height="24" viewBox="0 0 24 24" fill="none" stroke="#fff" stroke-width="1.6" stroke-linecap="round" stroke-linejoin="round"><path d="M7.5 6.5h9v8h-9z" fill="#d8dce0" stroke="none"/><path d="M7.5 14V6a1.5 1.5 0 0 1 3 0v5.5M10.5 11V4a1.5 1.5 0 0 1 3 0v7M13.5 11V5a1.5 1.5 0 0 1 3 0v6M16.5 11.5V7.5a1.5 1.5 0 0 1 3 0V15c0 4-3 7-6.5 7h-1.5c-2.5 0-4-1-5.5-3.2L3 15a1.5 1.5 0 0 1 2.3-1.9l2.2 2.4"/></svg>


<div id="taskbar" class="a"></div>
<svg class="a" style="left:15px;top:1052px" width="17" height="17" viewBox="0 0 17 17"><path d="M0 2.3l7-1v6.7H0zM8 1.2L17 0v8H8zM0 9h7v6.7l-7-1zM8 9h9v8l-9-1.2z" fill="#fff"/></svg>
<svg class="a" style="left:63px;top:1050px" width="19" height="19" viewBox="0 0 19 19" fill="none" stroke="#fff" stroke-width="1.5"><circle cx="11.5" cy="7.5" r="5.8"/><path d="M7.3 11.7L1 18"/></svg>
<svg class="a" style="left:113px;top:1046px" width="20" height="28" viewBox="0 0 20 28"><defs><linearGradient id="dg" x1="0" y1="0" x2="1" y2="1"><stop offset="0" stop-color="#f7c21b"/><stop offset=".35" stop-color="#f0533a"/><stop offset=".7" stop-color="#a23fd6"/><stop offset="1" stop-color="#2a8de8"/></linearGradient></defs><path d="M10 1C12 7 19 11 19 18a9 9 0 0 1-18 0C1 11 8 7 10 1z" fill="url(#dg)"/></svg>
<div class="a" style="left:103px;top:1077px;width:40px;height:3px;background:#c9b8f0"></div>
<div class="a" style="left:160px;top:1048px;width:23px;height:23px;border-radius:6px;background:#4a8cf7"></div>
<svg class="a" style="left:163px;top:1054px" width="17" height="11" viewBox="0 0 17 11"><rect x="0" y="1" width="11" height="9" rx="2" fill="#fff"/><path d="M12 4l5-3v9l-5-3z" fill="#fff"/></svg>
<div class="a" style="left:210px;top:1048px;width:23px;height:23px;border-radius:3px;background:#001e36"></div>
<div class="t" style="left:213px;top:1054px;font-size:12px;font-weight:bold;color:#31a8ff">Ps</div>
<div class="a" style="left:258px;top:1048px;width:24px;height:24px;border-radius:50%;background:#222;border:2px solid #7ac943"></div>
<svg class="a" style="left:262px;top:1052px" width="16" height="16" viewBox="0 0 16 16"><path d="M3 13l2-5 6-5 2 2-5 6z" fill="#fff"/></svg>
<div class="a" style="left:307px;top:1048px;width:24px;height:24px;border-radius:50%;background:#2ea5e0"></div>
<svg class="a" style="left:312px;top:1054px" width="14" height="12" viewBox="0 0 14 12"><path d="M1 5.5L13 1l-2 10-3.5-2.5L5.5 10.5 5 7.5l6-4.5-7 3.5z" fill="#fff"/></svg>
<div class="a" style="left:356px;top:1048px;width:24px;height:24px;border-radius:50%;background:#e0633d"></div>
<div class="a" style="left:352px;top:1051px;width:14px;height:16px;border-radius:2px;background:#c43e1c"></div>
<div class="t" style="left:355px;top:1053px;font-size:12px;font-weight:bold;color:#fff">P</div>
<div class="a" style="left:405px;top:1048px;width:24px;height:24px;border-radius:50%;background:#25d366"></div>
<svg class="a" style="left:405px;top:1048px" width="24" height="24" viewBox="0 0 24 24"><circle cx="12" cy="12" r="8" fill="none" stroke="#fff" stroke-width="1.6"/><path d="M5 20l1.5-4.5L9 18z" fill="#fff"/><path d="M9 8.5c0 3 3 6.5 6.5 6.5l.8-1.5-1.8-1-1 .8c-1-.4-2.3-1.7-2.8-2.8l.8-1-1-1.8z" fill="#fff"/></svg>
<div class="a" style="left:397px;top:1077px;width:40px;height:3px;background:#c9b8f0"></div>
<div class="a" style="left:454px;top:1048px;width:24px;height:24px;border-radius:50%;background:conic-gradient(from -30deg,#ea4335 0 33%,#fbbc04 33% 66%,#34a853 66%)"></div>
<div class="a" style="left:460px;top:1054px;width:12px;height:12px;border-radius:50%;background:#4285f4;border:2px solid #fff"></div>
<div class="a" style="left:465px;top:1058px;width:14px;height:14px;border-radius:50%;background:#5a6a90"></div>
<div class="a" style="left:446px;top:1077px;width:40px;height:3px;background:#c9b8f0"></div>
<div class="t" style="left:1874px;top:1046px;font-size:11px;color:#fff">16:15</div>
<div class="t" style="left:1860px;top:1064px;font-size:11px;color:#fff">11.02.2022</div>

</body></html>
